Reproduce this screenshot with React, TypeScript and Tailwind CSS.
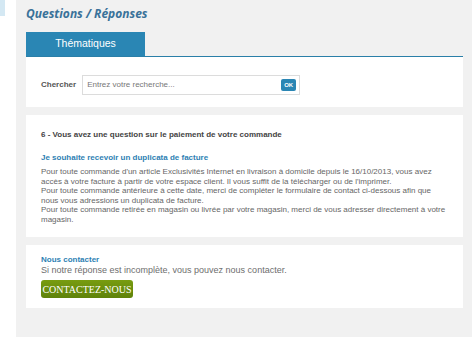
const arial = "font-['Liberation_Sans',Arial,sans-serif]";

export default function App() {
  return (
    <div className={`flex h-[339px] w-[474px] bg-white ${arial}`}>
      <div className="w-[16px] shrink-0">
        <div className="h-[16px] w-[5px] bg-[#d4e8f3]" />
      </div>

      <main className="flex h-[337px] w-[456px] flex-col bg-[#f1f1f1] pl-[10px] pr-[9px]">
        <div className="h-[32px] pt-[5px]">
          <h1 className="font-['Open_Sans',sans-serif] text-[12px] leading-[18px] font-bold italic text-[#3a7299]">
            Questions / Réponses
          </h1>
        </div>

        <div className="flex h-[24px] w-[119px] items-center justify-center bg-[#2a86b4] text-[10.5px] text-white">
          Thématiques
        </div>
        <div className="h-[1px] bg-[#2a7fa8]" />

        <section className="flex h-[50px] items-center gap-[6px] bg-white pt-[6px] pl-[15px]">
          <span className="text-[8px] font-bold text-[#555]">Chercher</span>
          <div className="flex h-[20px] w-[218px] items-center justify-between border border-[#dcdcdc] pr-[3px] pl-[4px]">
            <span className="text-[8px] text-[#777]">Entrez votre recherche...</span>
            <button className="flex h-[12px] w-[15px] items-center justify-center rounded-[2px] bg-[#2a86b4] text-[6px] font-bold text-white">
              OK
            </button>
          </div>
        </section>

        <section className="mt-[8px] h-[122px] bg-white pt-[14px] pl-[15px]">
          <h2 className="text-[8px] leading-[12px] font-bold text-[#444]">
            6 - Vous avez une question sur le paiement de votre commande
          </h2>
          <h3 className="mt-[11px] text-[8px] leading-[12px] font-bold text-[#2e7fb3]">
            Je souhaite recevoir un duplicata de facture
          </h3>
          <div className="mt-[3px] text-[8px] leading-[9.6px] whitespace-nowrap text-[#666]">
            <p>Pour toute commande d'un article Exclusivités Internet en livraison à domicile depuis le 16/10/2013, vous avez</p>
            <p>accès à votre facture à partir de votre espace client. Il vous suffit de la télécharger ou de l'imprimer.</p>
            <p>Pour toute commande antérieure à cette date, merci de compléter le formulaire de contact ci-dessous afin que</p>
            <p>nous vous adressions un duplicata de facture.</p>
            <p>Pour toute commande retirée en magasin ou livrée par votre magasin, merci de vous adresser directement à votre</p>
            <p>magasin.</p>
          </div>
        </section>

        <section className="mt-[8px] h-[63px] bg-white pt-[9px] pl-[15px]">
          <h3 className="text-[8px] leading-[11px] font-bold text-[#2e7fb3]">Nous contacter</h3>
          <p className="text-[9px] leading-[11px] text-[#6e6e6e]">
            Si notre réponse est incomplète, vous pouvez nous contacter.
          </p>
          <button className="mt-[4px] flex h-[18px] w-[92px] items-center justify-center rounded-[3px] bg-gradient-to-b from-[#789c10] to-[#5e820a] font-['Liberation_Serif',serif] text-[10px] text-white">
            CONTACTEZ-NOUS
          </button>
        </section>
      </main>
    </div>
  );
}
